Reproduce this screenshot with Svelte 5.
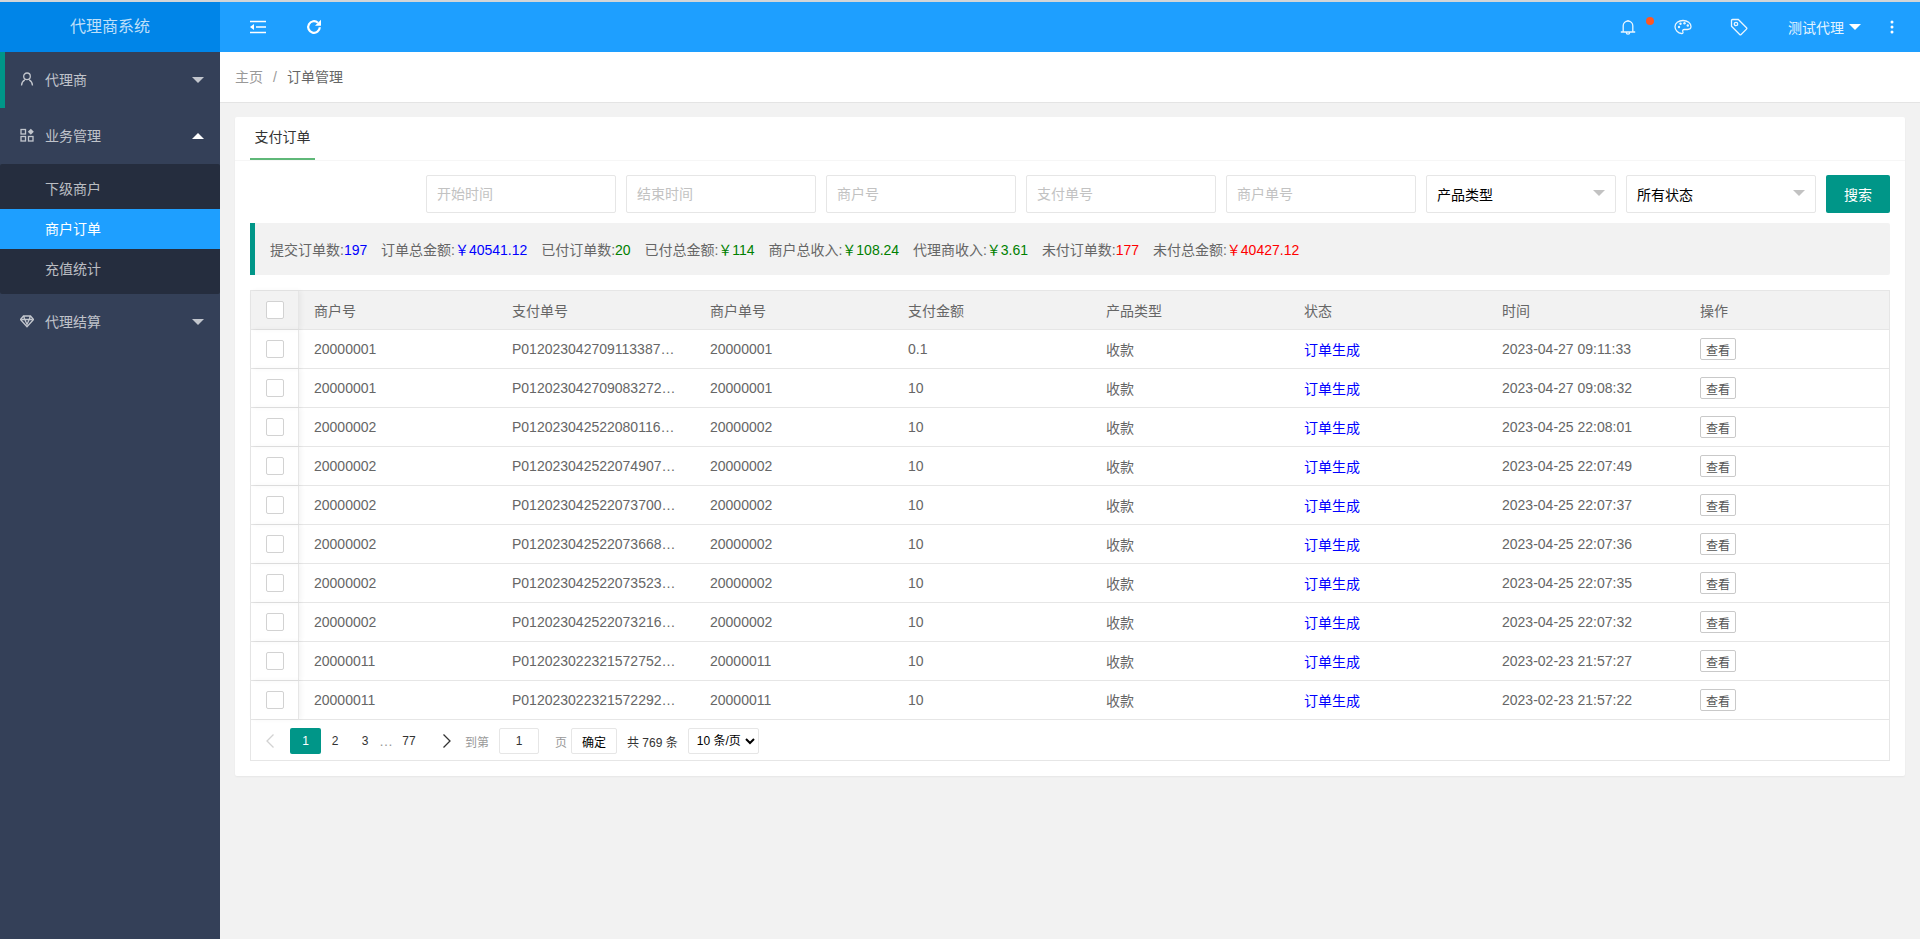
<script>
  const rows = [
    ['20000001','P0120230427091133871234','20000001','0.1','2023-04-27 09:11:33'],
    ['20000001','P0120230427090832721234','20000001','10','2023-04-27 09:08:32'],
    ['20000002','P0120230425220801161234','20000002','10','2023-04-25 22:08:01'],
    ['20000002','P0120230425220749071234','20000002','10','2023-04-25 22:07:49'],
    ['20000002','P0120230425220737001234','20000002','10','2023-04-25 22:07:37'],
    ['20000002','P0120230425220736681234','20000002','10','2023-04-25 22:07:36'],
    ['20000002','P0120230425220735231234','20000002','10','2023-04-25 22:07:35'],
    ['20000002','P0120230425220732161234','20000002','10','2023-04-25 22:07:32'],
    ['20000011','P0120230223215727521234','20000011','10','2023-02-23 21:57:27'],
    ['20000011','P0120230223215722921234','20000011','10','2023-02-23 21:57:22']
  ];
  const placeholders = ['开始时间','结束时间','商户号','支付单号','商户单号'];
  const heads = ['商户号','支付单号','商户单号','支付金额','产品类型','状态','时间','操作'];
</script>

<div class="strip"></div>
<div class="shell">
  <aside class="side">
    <div class="logo">代理商系统</div>
    <nav>
      <div class="group current">
        <svg class="ico" viewBox="0 0 14 14"><circle cx="7" cy="4.300" r="3.300"/><path d="M1.500 13.500c.2-3 1.800-4.800 3.300-5.600M12.500 13.500c-.2-3-1.800-4.800-3.300-5.600"/></svg>
        <span>代理商</span><i class="tri down"></i>
      </div>
      <div class="group">
        <svg class="ico" viewBox="0 0 14 14"><rect x="1" y="1.500" width="4.500" height="4.500"/><rect x="1" y="8.500" width="4.500" height="4.500"/><rect x="8.500" y="8.500" width="4.500" height="4.500"/><path class="fill" d="M10.800 .8l3 3-3 3-3-3z"/></svg>
        <span>业务管理</span><i class="tri up"></i>
      </div>
      <div class="sub">
        <div class="item">下级商户</div>
        <div class="item on">商户订单</div>
        <div class="item">充值统计</div>
      </div>
      <div class="group">
        <svg class="ico" viewBox="0 0 14 14"><path d="M3.500 2h7l3 3.500L7 12.800 .5 5.500z"/><path d="M1.500 5.500h11M4.800 5.500L7 10.500l2.200-5M3.800 2.500l1 3M10.200 2.500l-1 3"/></svg>
        <span>代理结算</span><i class="tri down"></i>
      </div>
    </nav>
  </aside>

  <div class="main">
    <header class="top">
      <svg class="t1" viewBox="0 0 16 14" width="16" height="14"><path d="M0 1.500h16M6 7h10M0 12.500h16" stroke-width="2.200"/><path class="fill" d="M0 7l4-3v6z"/></svg>
      <svg class="t2" viewBox="0 0 16 16" width="16" height="16"><path class="thick" d="M13.800 8.200a5.800 5.800 0 1 1-1.900-4.500"/><path class="fill" d="M15 0.800v6h-6z"/></svg>
      <div class="right">
        <svg class="bell" viewBox="0 0 16 16" width="16" height="16"><path d="M.8 13h14.400M3.200 13V6.800a4.800 4.800 0 0 1 9.600 0V13M6.300 13.500a1.700 1.700 0 0 0 3.400 0M8 1v1"/></svg>
        <i class="dot"></i>
        <svg class="pal" viewBox="0 0 18 16" width="18" height="16"><path d="M9 1.500c-4.500 0-8 2.800-8 6.300 0 3.300 3 6.200 6.500 6.700 1.500.2 1.800-.9 1.300-1.900-.5-1.100.1-2.100 1.600-2.100h3.100c2 0 3.500-1 3.500-2.900C17 4.100 13.500 1.500 9 1.500z"/><circle class="fill" cx="5" cy="8" r="1.200"/><circle class="fill" cx="6.500" cy="4.800" r="1.200"/><circle class="fill" cx="10.500" cy="4.300" r="1.200"/><circle class="fill" cx="13.800" cy="6.500" r="1.200"/></svg>
        <svg class="tag" viewBox="0 0 18 18" width="18" height="18"><path d="M1.500 2.500a1 1 0 0 1 1-1h5.800l8.200 8.200a1 1 0 0 1 0 1.400l-5.400 5.400a1 1 0 0 1-1.400 0L1.500 8.300z"/><circle cx="6" cy="6" r="1.700"/></svg>
        <span class="user">测试代理</span><i class="tri white"></i>
        <svg class="more" viewBox="0 0 4 14" width="4" height="14"><circle class="fill" cx="2" cy="2" r="1.500"/><circle class="fill" cx="2" cy="7" r="1.500"/><circle class="fill" cx="2" cy="12" r="1.500"/></svg>
      </div>
    </header>

    <div class="crumb"><span class="a">主页</span><span class="sep">/</span><span class="b">订单管理</span></div>

    <section class="card">
      <div class="tabs"><div class="tab">支付订单</div></div>
      <div class="body">
        <div class="filters">
          {#each placeholders as p}
            <input class="field" placeholder={p} />
          {/each}
          <div class="field select">产品类型<i class="tri gray"></i></div>
          <div class="field select">所有状态<i class="tri gray"></i></div>
          <button class="search">搜索</button>
        </div>

        <div class="stats">
          <span>提交订单数:<b class="blue">197</b></span>
          <span>订单总金额:<b class="blue">￥40541.12</b></span>
          <span>已付订单数:<b class="green">20</b></span>
          <span>已付总金额:<b class="green">￥114</b></span>
          <span>商户总收入:<b class="green">￥108.24</b></span>
          <span>代理商收入:<b class="green">￥3.61</b></span>
          <span>未付订单数:<b class="red">177</b></span>
          <span>未付总金额:<b class="red">￥40427.12</b></span>
        </div>

        <div class="table">
          <div class="tr head">
            <div class="chk"><i class="box"></i></div>
            {#each heads as h}<div class="td">{h}</div>{/each}
          </div>
          {#each rows as r}
            <div class="tr">
              <div class="chk"><i class="box"></i></div>
              <div class="td">{r[0]}</div>
              <div class="td">{r[1]}</div>
              <div class="td">{r[2]}</div>
              <div class="td">{r[3]}</div>
              <div class="td">收款</div>
              <div class="td link">订单生成</div>
              <div class="td">{r[4]}</div>
              <div class="td"><button class="view">查看</button></div>
            </div>
          {/each}
          <div class="pager">
            <svg class="arrow pv" viewBox="0 0 10 16" width="10" height="16"><path d="M8.500 1.500L2 8l6.500 6.500"/></svg>
            <span class="pg cur">1</span>
            <span class="pg">2</span>
            <span class="pg">3</span>
            <span class="dots">…</span>
            <span class="pg last">77</span>
            <svg class="arrow nx" viewBox="0 0 10 16" width="10" height="16"><path d="M1.500 1.500L8 8l-6.500 6.500"/></svg>
            <span class="lbl">到第</span>
            <input class="goto" value="1" />
            <span class="lbl pgw">页</span>
            <button class="ok">确定</button>
            <span class="total">共 769 条</span>
            <select class="size"><option>10 条/页</option></select>
          </div>
        </div>
      </div>
    </section>
  </div>
</div>

<style>
  :global(body) { margin: 0; background: #f2f2f2; font-family: "Liberation Sans", "Noto Sans CJK SC", sans-serif; font-size: 14px; color: #666; }
  .strip { height: 2px; background: #d2d5d8; }
  .shell { display: grid; grid-template-columns: 220px 1fr; min-height: 937px; }
  svg path, svg circle, svg rect { fill: none; stroke: currentColor; stroke-width: 1.300; }
  svg .fill { fill: currentColor; stroke: none; }
  svg .thick { stroke-width: 2.200; }

  .side { background: #344058; color: rgba(255,255,255,.7); }
  .logo { height: 50px; background: #0085e8; color: rgba(255,255,255,.75); font-size: 16px; line-height: 50px; text-align: center; }
  .group { height: 56px; box-sizing: border-box; padding: 0 0 2px 20px; display: flex; align-items: center; position: relative; }
  .group.current { box-shadow: inset 5px 0 0 #009688; }
  .ico { width: 14px; height: 14px; margin-right: 11px; flex: none; }
  .tri { width: 0; height: 0; border: 6px solid transparent; display: inline-block; }
  .group .tri { position: absolute; right: 16px; }
  .tri.down { border-top-color: rgba(255,255,255,.7); top: 25px; }
  .tri.up { border-bottom-color: #fff; top: 19px; }
  .sub { background: #252d3e; border-radius: 2px; padding: 5px 0; }
  .item { height: 40px; line-height: 40px; padding-left: 45px; }
  .item.on { background: #1e9fff; color: #fff; }

  .main { min-width: 0; }
  .top { height: 50px; background: #1e9fff; color: #fff; display: flex; align-items: center; }
  .t1 { margin-left: 30px; }
  .t2 { margin-left: 40px; }
  .right { margin-left: auto; display: flex; align-items: center; }
  .bell { color: rgba(255,255,255,.9); }
  .dot { width: 8px; height: 8px; border-radius: 50%; background: #ff5722; margin: -12px 0 0 10px; }
  .pal { margin-left: 20px; color: rgba(255,255,255,.9); }
  .tag { margin-left: 38px; color: rgba(255,255,255,.9); }
  .user { margin-left: 40px; font-size: 14px; color: rgba(255,255,255,.9); }
  .tri.white { border-top-color: #fff; margin: 6px 0 0 5px; }
  .more { margin: 0 26px 0 29px; }

  .crumb { height: 50px; background: #fff; border-bottom: 1px solid #e4e4e4; box-sizing: content-box; line-height: 50px; padding-left: 15px; }
  .crumb .a { color: #999; }
  .crumb .sep { color: #999; margin: 0 10px; }
  .crumb .b { color: #666; }

  .card { margin: 14px 15px 0; background: #fff; border-radius: 2px; box-shadow: 0 1px 2px rgba(0,0,0,.05); padding-bottom: 15px; }
  .tabs { height: 43px; border-bottom: 1px solid #f6f6f6; padding-left: 15px; }
  .tab { width: 65px; height: 43px; box-sizing: border-box; border-bottom: 2px solid #5fb878; color: #333; text-align: center; line-height: 40px; }
  .body { padding: 14px 15px 0; }
  .filters { display: flex; justify-content: flex-end; gap: 10px; }
  .field { width: 190px; height: 38px; box-sizing: border-box; border: 1px solid #e6e6e6; border-radius: 2px; padding: 0 10px; font: inherit; background: #fff; outline: none; }
  .field::placeholder { color: #c2c2c2; }
  .select { color: #000; line-height: 38px; position: relative; }
  .tri.gray { position: absolute; right: 10px; top: 14px; border-top-color: #c2c2c2; }
  .search { width: 64px; height: 38px; border: 0; border-radius: 2px; background: #009688; color: #fff; font: inherit; }

  .stats { margin-top: 10px; height: 52px; background: #f2f2f2; border-left: 5px solid #009688; border-radius: 0 2px 2px 0; padding-left: 15px; display: flex; align-items: center; gap: 13.800px; }
  .stats b { font-weight: normal; }
  .blue { color: #00f; }
  .green { color: #008000; }
  .red { color: #f00; }

  .table { margin-top: 15px; border: 1px solid #e6e6e6; }
  .tr { display: grid; grid-template-columns: 48px repeat(8, 198px); height: 39px; box-sizing: border-box; border-bottom: 1px solid #e6e6e6; align-items: center; }
  .tr.head { background: #f2f2f2; }
  .chk { height: 38px; border-right: 1px solid #e6e6e6; box-shadow: 2px 0 5px rgba(0,0,0,.05); display: flex; align-items: center; justify-content: center; box-sizing: border-box; }
  .box { width: 18px; height: 18px; box-sizing: border-box; background: #fff; border: 1px solid #d2d2d2; border-radius: 2px; }
  .td { padding: 0 15px; white-space: nowrap; overflow: hidden; text-overflow: ellipsis; }
  .link { color: #00f; }
  .view { width: 36px; height: 22px; padding: 0; display: block; background: #fff; border: 1px solid #c9c9c9; border-radius: 2px; color: #555; font: 12px "Liberation Sans", "Noto Sans CJK SC", sans-serif; }

  .pager { height: 38px; padding-top: 2px; display: flex; align-items: center; font-size: 12px; color: #333; }
  .arrow { margin-left: 14px; color: #333; }
  .arrow.pv { color: #d2d2d2; }
  .pg { width: 30px; text-align: center; }
  .pg.cur { width: 31px; margin-left: 15px; margin-right: -1px; height: 26px; line-height: 26px; background: #009688; color: #fff; border-radius: 2px; }
  .dots { color: #999; width: 14px; text-align: center; font-size: 14px; margin-left: -1px; }
  .pg.last { margin-left: 1px; }
  .arrow.nx { margin-left: 18px; margin-right: 13px; }
  .lbl { color: #999; }
  .goto { width: 40px; height: 26px; box-sizing: border-box; margin-left: 10px; border: 1px solid #e6e6e6; border-radius: 2px; text-align: center; font: inherit; color: #333; outline: none; }
  .pgw { margin-left: 16px; }
  .ok { width: 46px; height: 26px; margin-left: 4px; padding: 0; background: #fff; border: 1px solid #e6e6e6; border-radius: 2px; font: inherit; color: #000; }
  .total { margin-left: 10px; }
  .size { margin-left: 10px; width: 71px; height: 26px; background: #fff; border: 1px solid #e6e6e6; border-radius: 2px; font: inherit; color: #000; outline: none; padding: 0 0 0 4px; }
</style>
